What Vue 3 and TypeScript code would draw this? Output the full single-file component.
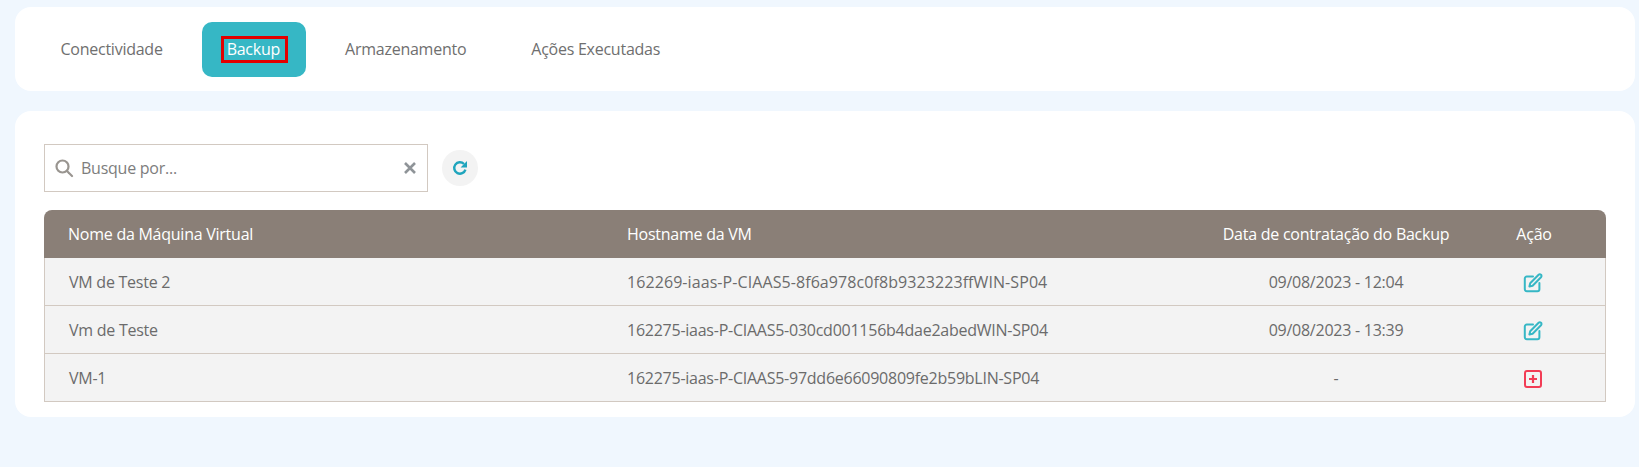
<script setup lang="ts">
import { ref } from 'vue'

// abas do topo
const tabs = ['Conectividade', 'Backup', 'Armazenamento', 'Ações Executadas']
const activeTab = ref('Backup')

const search = ref('')

// máquinas virtuais
const rows = [
  { id: 1, name: 'VM de Teste 2', host: '162269-iaas-P-CIAAS5-8f6a978c0f8b9323223ffWIN-SP04', date: '09/08/2023 - 12:04', hasBackup: true },
  { id: 2, name: 'Vm de Teste', host: '162275-iaas-P-CIAAS5-030cd001156b4dae2abedWIN-SP04', date: '09/08/2023 - 13:39', hasBackup: true },
  { id: 3, name: 'VM-1', host: '162275-iaas-P-CIAAS5-97dd6e66090809fe2b59bLIN-SP04', date: '-', hasBackup: false }
]
</script>

<template>
  <div class="page">
    <nav class="tabs-card">
      <a
        v-for="tab in tabs"
        :key="tab"
        class="tab"
        :class="{ active: tab === activeTab }"
      >
        <span class="tab-label">{{ tab }}</span>
      </a>
    </nav>

    <section class="content-card">
      <div class="toolbar">
        <div class="search-box">
          <svg class="search-icon" viewBox="0 0 20 20" width="20" height="20" fill="none" stroke="#999590" stroke-width="2.2">
            <circle cx="8.5" cy="8.5" r="6" />
            <path d="M13 13l5 5" stroke-linecap="round" />
          </svg>
          <input v-model="search" type="text" placeholder="Busque por..." />
          <svg class="clear-icon" viewBox="0 0 14 14" width="14" height="14" fill="none" stroke="#8f9498" stroke-width="2.6">
            <path d="M2 2l10 10M12 2L2 12" />
          </svg>
        </div>
        <button class="refresh" type="button">
          <svg viewBox="0 0 16 16" width="16" height="16" fill="none">
            <path d="M13.4 9.6A5.7 5.7 0 1 1 12 4" stroke="#1fa5bd" stroke-width="2.4" />
            <path d="M15 1v6.4H8.6z" fill="#1fa5bd" />
          </svg>
        </button>
      </div>

      <table class="vm-table">
        <thead>
          <tr>
            <th class="col-name">Nome da Máquina Virtual</th>
            <th class="col-host">Hostname da VM</th>
            <th class="col-date">Data de contratação do Backup</th>
            <th class="col-action">Ação</th>
          </tr>
        </thead>
        <tbody>
          <tr v-for="row in rows" :key="row.id">
            <td class="col-name">{{ row.name }}</td>
            <td class="col-host" :class="{ 'host-wide': row.id === 1 }">{{ row.host }}</td>
            <td class="col-date">{{ row.date }}</td>
            <td class="col-action">
              <svg v-if="row.hasBackup" class="action-icon" viewBox="0 0 20 20" width="20" height="20" fill="none" stroke="#36b7c5" stroke-width="2" stroke-linejoin="round" stroke-linecap="round">
                <path d="M10 3.6H3.8A2 2 0 0 0 1.8 5.6v10.6a2 2 0 0 0 2 2h10.6a2 2 0 0 0 2-2V10" />
                <path d="M7.2 10.2L15.6 1.8a1.6 1.6 0 0 1 2.4 2.4L9.6 12.8l-3.2.8z" />
              </svg>
              <svg v-else class="action-icon" viewBox="0 0 18 18" width="18" height="18" fill="none" stroke="#f23c55">
                <rect x="1" y="1" width="16" height="16" rx="2" stroke-width="2" />
                <path d="M5 9h8M9 5v8" stroke-width="2.2" />
              </svg>
            </td>
          </tr>
        </tbody>
      </table>
    </section>
  </div>
</template>

<style>
html,
body {
  margin: 0;
  background: #f0f7fe;
}
</style>

<style scoped>
.page {
  box-sizing: border-box;
  height: 467px;
  padding: 7px 4px 0 15px;
  font-family: 'Open Sans', 'Noto Sans', sans-serif;
  font-size: 16px;
  letter-spacing: -0.25px;
  color: #6b6b6b;
  background: #f0f7fe;
  overflow: hidden;
}

.tabs-card {
  display: flex;
  gap: 14px;
  height: 84px;
  box-sizing: border-box;
  padding: 15px 19px 14px 20px;
  background: #fff;
  border-radius: 16px;
}

.tab {
  display: flex;
  align-items: center;
  padding: 0 18.5px 2px;
  border-radius: 10px;
  color: #6f6f6f;
  cursor: pointer;
}

.tab.active {
  background: #36b7c5;
  color: #fff;
  padding: 0 17.5px 0 18.5px;
}

.tab.active .tab-label {
  border: 3px solid #e30000;
  padding: 0 5px 0 3px;
  line-height: 21px;
}

.tab-label {
  padding: 0 7px;
}

.content-card {
  margin-top: 20px;
  box-sizing: border-box;
  height: 306px;
  padding: 33px 29px 0;
  background: #fff;
  border-radius: 16px;
}

.toolbar {
  display: flex;
  align-items: center;
  gap: 14px;
  margin-bottom: 18px;
}

.search-box {
  display: flex;
  align-items: center;
  box-sizing: border-box;
  width: 384px;
  height: 48px;
  padding: 0 10px 0 9px;
  border: 1px solid #d2c9c1;
}

.search-icon {
  flex: none;
}

.search-box input {
  flex: 1;
  min-width: 0;
  margin-left: 7px;
  padding: 0;
  border: none;
  outline: none;
  background: transparent;
  font: inherit;
  letter-spacing: inherit;
  color: #6b6b6b;
}

.search-box input::placeholder {
  color: #7d7d7d;
  opacity: 1;
}

.refresh {
  display: flex;
  align-items: center;
  justify-content: center;
  width: 36px;
  height: 36px;
  padding: 0;
  border: none;
  border-radius: 50%;
  background: #f3f3f3;
  cursor: pointer;
}

.vm-table {
  width: 100%;
  border-collapse: separate;
  border-spacing: 0;
  table-layout: fixed;
}

.vm-table th {
  height: 48px;
  padding: 0;
  background: #8a7f77;
  color: #fff;
  font-weight: 400;
  text-align: left;
}

.vm-table th:first-child {
  border-top-left-radius: 8px;
}

.vm-table th:last-child {
  border-top-right-radius: 8px;
}

.vm-table td {
  height: 47px;
  padding: 0;
  background: #f3f3f3;
  border-bottom: 1px solid #d2c9c1;
}

.vm-table td:first-child {
  border-left: 1px solid #d2c9c1;
}

.vm-table td:last-child {
  border-right: 1px solid #d2c9c1;
}

.col-name {
  width: 583px;
  padding-left: 24px !important;
  box-sizing: border-box;
}

.col-host {
  width: 583px;
}

.host-wide {
  letter-spacing: 0.08px;
}

.col-date {
  width: 252px;
  text-align: center !important;
}

.col-action {
  text-align: center !important;
}

.action-icon {
  display: inline-block;
  vertical-align: middle;
  margin-left: -2px;
}
</style>
